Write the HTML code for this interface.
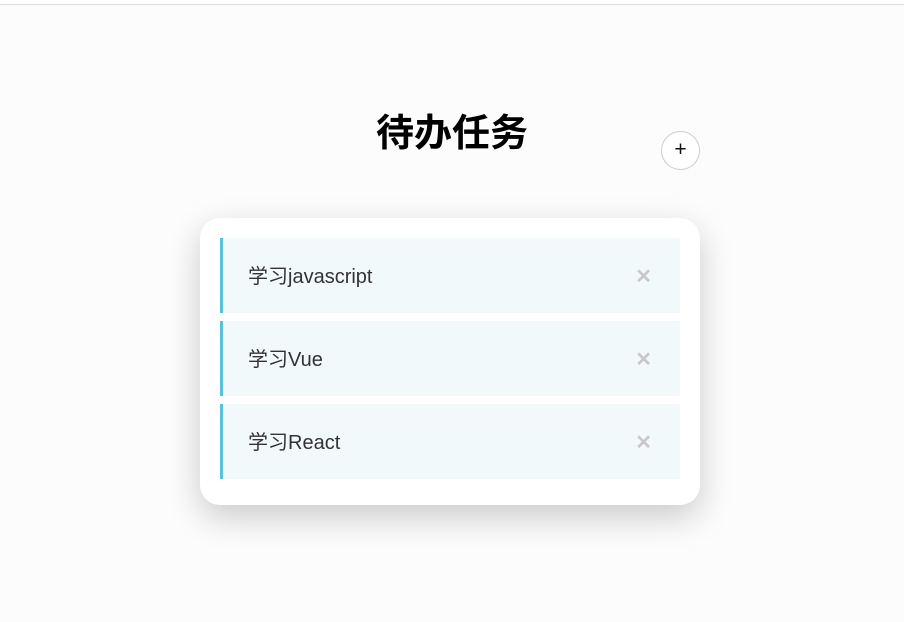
<!DOCTYPE html>
<html><head><meta charset="utf-8"><style>
body{margin:0;width:904px;height:622px;background:#fcfcfc;font-family:"Liberation Sans","Noto Sans CJK SC",sans-serif;position:relative;overflow:hidden}
.top{position:absolute;left:0;top:0;width:904px;height:4px;background:#fff;border-bottom:1px solid #ddd}
h1{position:absolute;left:0;width:904px;top:111px;margin:0;text-align:center;font-size:38px;font-weight:bold;color:#000;line-height:46px}
.add{position:absolute;left:661px;top:131px;width:37px;height:37px;border:1px solid #ccc;border-radius:50%;background:#fff;text-align:center;line-height:36px;font-size:21px;color:#111}
.card{position:absolute;left:200px;top:218px;width:500px;height:287px;background:#fff;border-radius:20px;box-shadow:0 12px 34px rgba(0,0,0,0.2)}
.item{position:absolute;left:20px;width:457px;height:75px;background:#f2f9fb;border-left:3px solid #5bc0de}
.item span{position:absolute;left:25px;top:1px;line-height:77px;font-size:20px;color:#333}
.item b{position:absolute;right:28px;top:1px;line-height:77px;font-size:20px;color:#c8c8c8;font-weight:bold}
</style></head><body>
<div class="top"></div>
<h1>待办任务</h1>
<div class="add">+</div>
<div class="card">
<div class="item" style="top:20px"><span>学习javascript</span><b>✕</b></div>
<div class="item" style="top:103px"><span>学习Vue</span><b>✕</b></div>
<div class="item" style="top:186px"><span>学习React</span><b>✕</b></div>
</div>
</body></html>
